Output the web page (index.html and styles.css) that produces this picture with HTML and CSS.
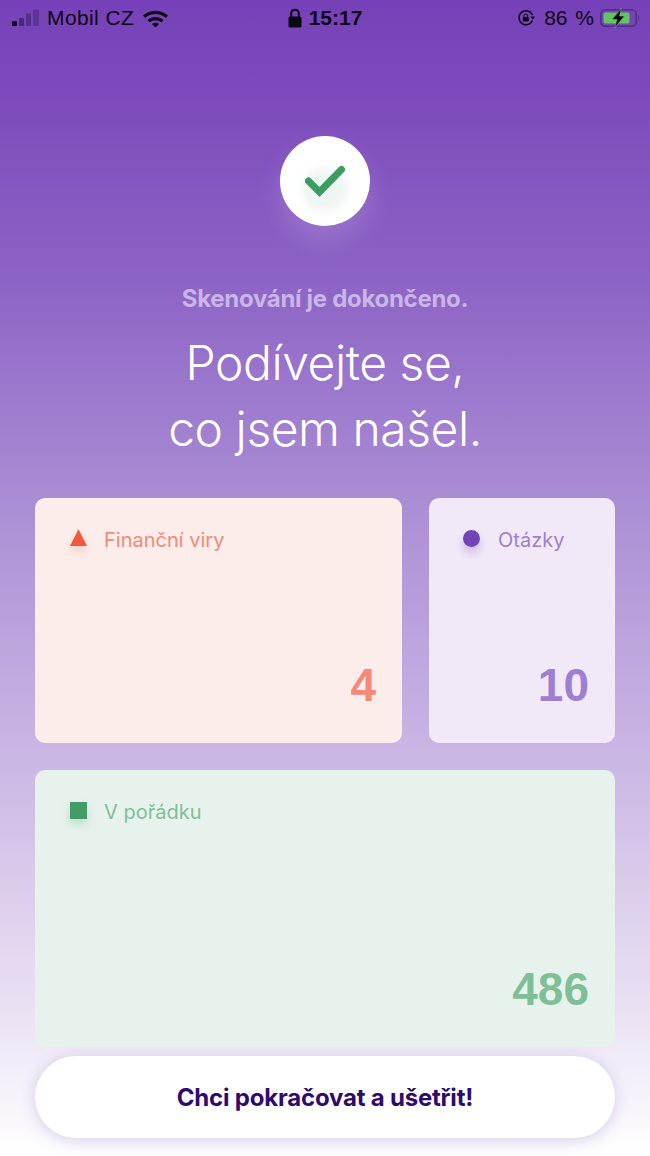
FILE: index.html
```html
<!DOCTYPE html>
<html lang="cs">
<head>
<meta charset="utf-8">
<title>Skenování</title>
<link rel="stylesheet" href="styles.css">
</head>
<body>
<div class="screen">
  <div class="status">
    <div class="status-side">
      <svg class="signal" width="30" height="18" viewBox="0 0 30 18"><rect x="1" y="12" width="5" height="5" rx="1" fill="#14091f"/><rect x="8" y="9" width="5" height="8" rx="1" fill="#47287a"/><rect x="15" y="4.500" width="5" height="12.500" rx="1" fill="#53308a"/><rect x="22" y="0.500" width="6" height="16.500" rx="1" fill="#5a3692"/></svg>
      <span class="carrier">Mobil CZ</span>
      <svg class="wifi" width="27" height="19" viewBox="0 0 27 19"><path d="M1 6.500C8 0 19 0 26 6.500L24 8.800C18 3.700 9 3.700 3 8.800Z" fill="#0d0815"/><path d="M5.500 11C10 7 17 7 21.500 11L19.300 13.200C16 10.500 11 10.500 7.700 13.200Z" fill="#0d0815"/><path d="M10 15C12 13.400 15 13.400 17 15L13.500 18.500Z" fill="#0d0815"/></svg>
    </div>
    <div class="status-center">
      <svg width="14" height="20" viewBox="0 0 14 20"><path d="M3.200 9V5.500a3.800 3.800 0 0 1 7.600 0V9" fill="none" stroke="#0d0815" stroke-width="2"/><rect x="0.500" y="8.500" width="13" height="11" rx="1.500" fill="#0d0815"/></svg>
      <span class="time">15:17</span>
    </div>
    <div class="status-side status-right">
      <svg class="rotation" width="19" height="18" viewBox="0 0 19 18"><path d="M15.500 11.500A7 7 0 1 1 15.500 6" fill="none" stroke="#0d0815" stroke-width="1.500"/><path d="M13.500 7.500h4.500l-2.200 3z" fill="#0d0815"/><rect x="5.800" y="8" width="6" height="4.500" rx="0.700" fill="#0d0815"/><path d="M7 8V6.800a1.800 1.800 0 0 1 3.600 0V8" fill="none" stroke="#0d0815" stroke-width="1"/></svg>
      <span class="battery-text">86 %</span>
      <svg width="40" height="22" viewBox="0 0 40 22"><rect x="0.800" y="2.800" width="35.500" height="16.500" rx="4.500" fill="none" stroke="#4f2e80" stroke-width="1.500"/><rect x="3.500" y="5.500" width="26" height="11" rx="2" fill="#62c462"/><path d="M38 8.500c1.500.5 1.500 4.500 0 5z" fill="#4f2e80"/><path d="M21.500 1 12 12.500h5l-2.500 8.500 10-12h-5z" fill="#0d0815" stroke="#62c462" stroke-width="0.600"/></svg>
    </div>
  </div>

  <div class="hero">
    <div class="badge">
      <span class="badge-glow"></span>
      <svg class="check" width="44" height="34" viewBox="0 0 44 34"><path d="M5.500 17 16.500 28 38.500 5.500" fill="none" stroke="#3e9b62" stroke-width="7" stroke-linecap="round" stroke-linejoin="miter"/></svg>
    </div>
    <p class="eyebrow">Skenování je dokončeno.</p>
    <h1 class="headline">Podívejte se,<br>co jsem našel.</h1>
  </div>

  <div class="cards">
    <div class="card card-virus">
      <div class="card-label"><span class="marker triangle"></span>Finanční viry</div>
      <div class="card-value">4</div>
    </div>
    <div class="card card-question">
      <div class="card-label"><span class="marker dot"></span>Otázky</div>
      <div class="card-value">10</div>
    </div>
    <div class="card card-ok">
      <div class="card-label"><span class="marker square"></span>V pořádku</div>
      <div class="card-value">486</div>
    </div>
  </div>

  <button class="cta" type="button">Chci pokračovat a ušetřit!</button>
</div>
</body>
</html>
```

FILE: styles.css
```css
* { box-sizing: border-box; }
html, body { margin: 0; padding: 0; }
body { font-family: Inter, "Liberation Sans", sans-serif; }

.screen {
  width: 650px;
  height: 1156px;
  overflow: hidden;
  display: flex;
  flex-direction: column;
  background: linear-gradient(180deg, #7641b8 0%, #7c4abc 8%, #8d62c5 24%, #ab8fd5 44%, #cdb9e5 67%, #ebe3f4 88%, #ffffff 100%);
}

.status {
  height: 36px;
  display: grid;
  grid-template-columns: 1fr auto 1fr;
  align-items: center;
  padding: 0 10px;
  color: #0d0815;
  font-family: "Liberation Sans", sans-serif;
  font-size: 21px;
}
.status-side { display: flex; align-items: center; }
.status-right { justify-content: flex-end; }
.status-center { display: flex; align-items: center; gap: 7px; }
.signal { margin-left: 1px; }
.carrier { margin-left: 6px; letter-spacing: 0.4px; }
.wifi { margin-left: 8px; }
.time { font-weight: 700; }
.rotation { margin-right: 8px; }
.battery-text { margin-right: 6px; word-spacing: 2px; }

.hero {
  display: flex;
  flex-direction: column;
  align-items: center;
  padding-top: 100px;
}
.badge {
  position: relative;
  width: 90px;
  height: 90px;
  border-radius: 50%;
  background: #fff;
  display: flex;
  align-items: center;
  justify-content: center;
  box-shadow: 0 14px 28px rgba(255, 255, 255, 0.16);
}
.badge-glow {
  position: absolute;
  left: 22px;
  top: 32px;
  width: 46px;
  height: 44px;
  border-radius: 50%;
  background: #eef6f2;
  filter: blur(5px);
}
.check { position: relative; }
.eyebrow {
  margin: 59px 0 0;
  font-size: 24px;
  line-height: 27px;
  font-weight: 700;
  letter-spacing: -0.3px;
  color: #c9b6e6;
}
.headline {
  margin: 18px 0 0;
  font-size: 48px;
  line-height: 66px;
  font-weight: 300;
  letter-spacing: -0.45px;
  text-align: center;
  color: #fff;
}

.cards {
  margin: 36px 35px 0;
  display: grid;
  grid-template-columns: 367px 186px;
  grid-template-rows: 245px 277px;
  column-gap: 27px;
  row-gap: 27px;
}
.card {
  border-radius: 10px;
  padding: 28px 26px 33px 35px;
  display: flex;
  flex-direction: column;
  justify-content: space-between;
}
.card-virus { background: #fdedea; color: #f48a79; }
.card-question { background: #f1e9f8; color: #9f7fd1; }
.card-ok { grid-column: 1 / -1; background: #e8f2ec; color: #7fbf97; }

.card-label {
  display: flex;
  align-items: center;
  gap: 17px;
  font-size: 20px;
  line-height: 28px;
}
.marker { display: block; flex: none; margin-top: -4px; }
.triangle {
  width: 17px;
  height: 16px;
  border-left: 8.5px solid transparent;
  border-right: 8.5px solid transparent;
  border-bottom: 16px solid #f1593f;
  filter: drop-shadow(0 5px 4px rgba(241, 89, 63, 0.22));
}
.dot {
  width: 17px;
  height: 17px;
  margin-left: -1px;
  margin-right: 1px;
  border-radius: 50%;
  background: #7342b8;
  box-shadow: 0 6px 10px rgba(115, 66, 184, 0.3);
}
.square {
  width: 17px;
  height: 17px;
  background: #439c68;
  box-shadow: 0 5px 10px rgba(67, 156, 104, 0.25);
}
.card-value {
  align-self: flex-end;
  font-family: "Liberation Sans", sans-serif;
  font-weight: 700;
  font-size: 46px;
  line-height: 50px;
}

.cta {
  margin: 9px 35px 0;
  height: 82px;
  flex: none;
  border: 0;
  border-radius: 41px;
  background: #fff;
  color: #2f0a6e;
  font-family: Inter, "Liberation Sans", sans-serif;
  font-size: 24px;
  font-weight: 700;
  letter-spacing: -0.2px;
  box-shadow: 0 3px 16px rgba(115, 66, 184, 0.24);
}
```
